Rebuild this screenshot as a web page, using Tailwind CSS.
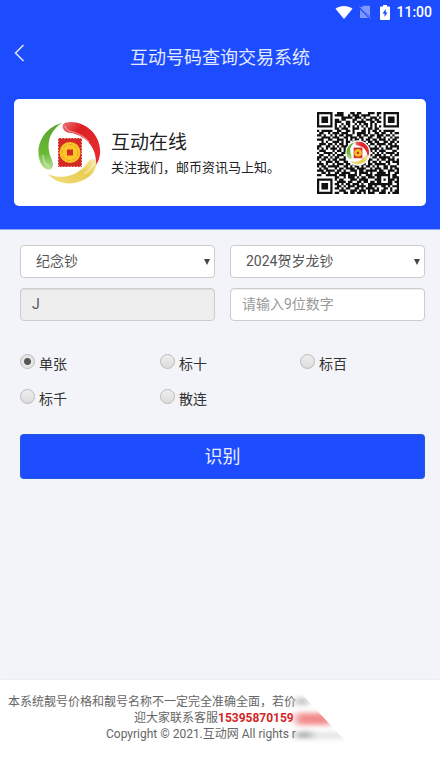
<!DOCTYPE html>
<html lang="zh-CN">
<head>
  <meta charset="UTF-8" />
  <meta name="viewport" content="width=device-width, initial-scale=1.0" />
  <title>互动号码查询交易系统</title>
  <script src="https://cdn.jsdelivr.net/npm/@tailwindcss/browser@4"></script>
</head>
<body class="min-h-screen flex flex-col bg-[#f3f4f9] text-[#333] font-[Roboto,'Noto_Sans_CJK_SC',sans-serif]">

  <header class="bg-[#1d4cff] border-b border-[#8ea6fb] px-[14px] pb-[23px]">
    <!-- Barra de estado -->
    <div class="h-6 -mr-[6px] flex items-center justify-end text-white">
      <svg class="w-[18px] h-[14px]" viewBox="0 0 18 14" fill="currentColor"><path d="M.5 3.800C5.200 0 12.800 0 17.500 3.800L9 14Z"/></svg>
      <svg class="w-3 h-[14px] ml-[6px] text-[#7f98fd]" viewBox="0 0 12 14"><path d="M4.500 .8H11V11.500L1.800 2.800ZM1 4.500L9.500 13H1Z" fill="currentColor"/><path d="M.5 1.500L11.700 13.500" stroke="currentColor"/></svg>
      <svg class="w-[10px] h-[15px] ml-[9px]" viewBox="0 0 10 15"><path d="M3 0H7V1.500H9Q10 1.500 10 2.500V14Q10 15 9 15H1Q0 15 0 14V2.500Q0 1.500 1 1.500H3Z" fill="currentColor"/><path d="M5.800 4L2.500 8.500H4.500V12L7.600 7.500H5.800Z" fill="#1d4cff"/></svg>
      <span class="ml-[6px] text-sm font-medium">11:00</span>
    </div>

    <div class="relative h-[75px] flex justify-center pt-5">
      <button type="button" aria-label="返回" class="absolute left-0 top-5 text-[#e4eaff]">
        <svg class="w-3 h-[18px]" viewBox="0 0 12 18" fill="none" stroke="currentColor" stroke-width="1.500"><path d="M9.500 1L1.500 9L9.500 17"/></svg>
      </button>
      <h1 class="text-lg leading-[27px] text-[#e4eaff]">互动号码查询交易系统</h1>
    </div>

    <!-- Tarjeta -->
    <section class="h-[107px] rounded-[5px] bg-white flex items-center pl-6 pr-[27px] text-[#222]">
      <svg class="w-[64px] h-[64px] shrink-0" viewBox="0 0 64 64">
        <defs>
          <linearGradient id="rojo" x1="0" y1="0" x2="1" y2="1"><stop offset="0" stop-color="#e97777"/><stop offset=".3" stop-color="#dc2024"/><stop offset="1" stop-color="#e82c30"/></linearGradient>
          <linearGradient id="verde" x1="0" y1="0" x2="0" y2="1"><stop offset="0" stop-color="#58a52c"/><stop offset=".65" stop-color="#6ab936"/><stop offset="1" stop-color="#bde29b"/></linearGradient>
          <linearGradient id="oro" x1="1" y1="0" x2="0" y2="1"><stop offset="0" stop-color="#f7ebae"/><stop offset=".4" stop-color="#e9cd50"/><stop offset="1" stop-color="#f0de80"/></linearGradient>
        </defs>
        <g id="logo">
          <path d="M28 1.500C45-2 64 13 62 33Q61 40 58 44C59 28 50 16 34 12C24 12 22 3 28 1.500Z" fill="url(#rojo)"/>
          <path d="M24 2C8 6-2 21 1 37C3 46 8 50 13 48C18 44 12 37 11 30C9 19 14 8 24 2Z" fill="url(#verde)"/>
          <path d="M10 53C20 65 41 66 54 53C57 50 60 42 57 39C53 36 50 41 47 45C38 55 23 59 10 53Z" fill="url(#oro)"/>
          <path d="M27 5Q28 10 35 11Q44 13 51 21M5 34Q5 43 11 45M56 41Q54 48 46 53" fill="none" stroke="#fff" stroke-opacity=".5" stroke-width="1.200"/>
          <path d="M20 17H44V46H20Z" fill="#d42a25"/>
          <path d="M20 17H44V46H20Z" fill="none" stroke="#fff" stroke-width="1.200" stroke-dasharray="1.500 1.500"/>
          <circle cx="32" cy="31.500" r="10.500" fill="#f9c529"/>
          <circle cx="32" cy="31.500" r="8" fill="none" stroke="#ef9a20" stroke-dasharray="4 2"/>
          <path d="M29 28.500H35V34.500H29Z" fill="#d42a25"/>
        </g>
      </svg>
      <div class="ml-[9px] flex-1 pt-[3px] whitespace-nowrap">
        <h2 class="text-[19px] leading-7">互动在线</h2>
        <p class="text-[13px] leading-[22px]">关注我们，邮币资讯马上知。</p>
      </div>
      <svg class="w-[82px] h-[82px] shrink-0" viewBox="0 0 37 37" role="img" aria-label="二维码">
        <path id="qr" fill="#111"/>
        <circle cx="18.500" cy="18.500" r="5.700" fill="#fff"/>
        <svg x="13.200" y="13.200" width="10.600" height="10.600" viewBox="0 0 64 64"><use href="#logo"/></svg>
      </svg>
    </section>
  </header>

  <main class="flex-1 pl-5 pt-[15px]">
    <form id="consulta" class="text-sm">
      <div class="grid grid-cols-2 gap-x-[15px] gap-y-[10px] pr-[15px] text-[#555]">
        <div class="relative">
          <select aria-label="类别" class="w-full h-[33px] appearance-none rounded border border-[#ccc] bg-white pl-[15px] pr-6 pb-[2px]">
            <option>纪念钞</option>
          </select>
          <svg class="absolute right-[5px] top-[14px] w-[6px] h-[6px] pointer-events-none" viewBox="0 0 6 6"><path d="M0 0H6L3 6Z" fill="#444"/></svg>
        </div>
        <div class="relative">
          <select aria-label="品种" class="w-full h-[33px] appearance-none rounded border border-[#ccc] bg-white pl-[15px] pr-6 pb-[2px]">
            <option>2024贺岁龙钞</option>
          </select>
          <svg class="absolute right-[5px] top-[14px] w-[6px] h-[6px] pointer-events-none" viewBox="0 0 6 6"><path d="M0 0H6L3 6Z" fill="#444"/></svg>
        </div>
        <input aria-label="冠号" value="J" readonly class="w-full h-[33px] rounded border border-[#ccc] bg-[#eee] px-[11px] pb-[2px] shadow-[inset_0_1px_1px_#00000013]" />
        <input aria-label="号码" placeholder="请输入9位数字" class="w-full h-[33px] rounded border border-[#ccc] bg-white px-[11px] pb-[2px] placeholder:text-[#999] shadow-[inset_0_1px_1px_#00000013]" />
      </div>

      <div class="mt-[25px] grid grid-cols-3">
        <label class="h-[35px] flex items-center gap-1"><input type="radio" name="tipo" checked class="appearance-none w-[15px] h-[15px] -mt-1 rounded-full border border-[#bbb] bg-[radial-gradient(circle,#555_0_3px,#e6e6e6_4px)]" />单张</label>
        <label class="h-[35px] flex items-center gap-1"><input type="radio" name="tipo" class="appearance-none w-[15px] h-[15px] -mt-1 rounded-full border border-[#bbb] bg-linear-to-b from-[#eee] to-[#dcdcdc]" />标十</label>
        <label class="h-[35px] flex items-center gap-1"><input type="radio" name="tipo" class="appearance-none w-[15px] h-[15px] -mt-1 rounded-full border border-[#bbb] bg-linear-to-b from-[#eee] to-[#dcdcdc]" />标百</label>
        <label class="h-[35px] flex items-center gap-1"><input type="radio" name="tipo" class="appearance-none w-[15px] h-[15px] -mt-1 rounded-full border border-[#bbb] bg-linear-to-b from-[#eee] to-[#dcdcdc]" />标千</label>
        <label class="h-[35px] flex items-center gap-1"><input type="radio" name="tipo" class="appearance-none w-[15px] h-[15px] -mt-1 rounded-full border border-[#bbb] bg-linear-to-b from-[#eee] to-[#dcdcdc]" />散连</label>
      </div>

      <div class="mt-[18px] pr-[15px]">
        <button type="submit" class="w-full h-[45px] rounded bg-[#1d4cff] border border-[#2e6da4]/40 text-lg text-[#e8edff]">识别</button>
      </div>
    </form>
  </main>

  <footer class="relative h-[102px] bg-white pt-[14px] text-xs leading-4 text-[#666] whitespace-nowrap shadow-[0_-1px_2px_#0000000a]">
    <p class="pl-2">本系统靓号价格和靓号名称不一定完全准确全面，若价</p>
    <p class="pl-[134px]">迎大家联系客服<b class="text-[#d22626]">15395870159</b></p>
    <p class="pl-[106px]">Copyright © 2021.互动网 All rights r</p>
    <svg class="absolute left-[284px] top-3 w-[68px] h-[56px]" viewBox="0 0 68 56">
      <defs>
        <filter id="suave" x="-50%" y="-100%" width="200%" height="300%"><feGaussianBlur stdDeviation="4 2.500"/></filter>
        <clipPath id="corte"><path d="M0 0H16L64 52H0Z"/></clipPath>
      </defs>
      <g clip-path="url(#corte)">
        <g filter="url(#suave)">
          <path d="M12 6H24V13H12Z" fill="#bbb"/>
          <path d="M12 21H48V33H12Z" fill="#f28c8c"/>
          <path d="M12 40H28V46H12Z" fill="#a5a5a5"/>
          <path d="M28 40H64V47H28Z" fill="#e6e6e6"/>
        </g>
      </g>
    </svg>
  </footer>

  <script>
    const filas = [
      '1111111001110001101100011101101111111',
      '1000001011110010111011110001001000001',
      '1011101000011111011101001110101011101',
      '1011101011011000110010111011001011101',
      '1011101011100110101111001101101011101',
      '1000001010010110010101101010001000001',
      '1111111010101010101010101010101111111',
      '0000000011011100111001011011000000000',
      '1011111001100110100011010110101111100',
      '0110010111011100101111010011011001011',
      '1101001010110111001101101101110110100',
      '0011110111001101110110011001101001011',
      '1110011001110101011010110110111010110',
      '0010100111010110110011011011001101101',
      '0111011010110101101101101101111011010',
      '1100110101011101110110110010100101111',
      '1010101110101011010110011111010111001',
      '0111000101101101101101101010111000110',
      '1001111010011011010110110101010111101',
      '0110010101110100110101011011101001011',
      '1101101011001011011010110110111110100',
      '1011010110111010110110111001011011101',
      '0100111011001101101011010110100110111',
      '1110100101110110110111011011111010001',
      '1011011111001101011010110101001101110',
      '0101100010110111101111001011101101011',
      '1110111101101001110110111110110011101',
      '0011010011011110010111101001111010011',
      '1100111110111011110100111011111110110',
      '0000000011001011101011011101100010111',
      '1111111010110001110111100011101011101',
      '1000001001111011001101101101100011011',
      '1011101011010110111010011111111111001',
      '1011101001101011101111011010011010111',
      '1011101011010110011010111101001101001',
      '1000001000111001110111010111011001011',
      '1111111011001101101101011100111010111'
    ];

    // une los módulos seguidos de cada fila en un solo rectángulo
    let d = '';
    filas.forEach((fila, y) => {
      for (const m of fila.matchAll(/1+/g)) {
        d += `M${m.index} ${y}h${m[0].length}v1h-${m[0].length}z`;
      }
    });
    document.getElementById('qr').setAttribute('d', d);

    document.getElementById('consulta').addEventListener('submit', (e) => e.preventDefault());
  </script>
</body>
</html>
